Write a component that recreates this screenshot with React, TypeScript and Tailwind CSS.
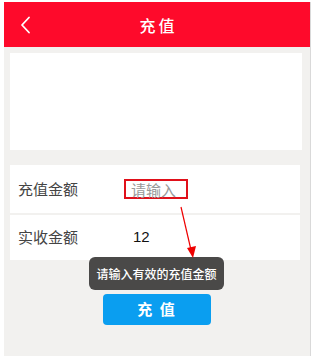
import React from 'react';

const cjk = { fontFamily: '"Noto Sans CJK SC", "Noto Sans", sans-serif' };

export default function App() {
  return (
    <div className="w-[317px] h-[356px] bg-white overflow-hidden pl-[4px] pt-[2px]" style={cjk}>
      <div className="relative w-[307px] h-[354px] bg-[#f2f1ef] border-r border-[#d9d9d9] flex flex-col">
        {/* header */}
        <div className="relative h-[45px] bg-[#fe0a2b] flex items-center justify-center">
          <svg className="absolute left-[15px] top-[14px]" width="16" height="18" viewBox="0 0 16 18">
            <path d="M10 1.5 L3 9 L10 16.5" fill="none" stroke="white" strokeWidth="1.8" strokeLinecap="round" strokeLinejoin="round" />
          </svg>
          <span className="text-white text-[16px] font-medium tracking-[3px] pl-[3px]">充值</span>
        </div>

        <div className="mt-[6px] ml-[6px] mr-[8px] h-[97px] bg-white" />

        {/* form */}
        <div className="mt-[15px] ml-[6px] mr-[10px] h-[48px] bg-white flex items-center">
          <span className="ml-[8px] w-[106px] text-[15px] text-[#444]">充值金额</span>
          <div className="h-[20px] w-[64px] border-2 border-[#e0101a] flex items-center">
            <span className="ml-[5px] text-[15px] text-[#999] leading-none">请输入</span>
          </div>
        </div>
        <div className="mt-[2px] ml-[6px] mr-[10px] h-[45px] bg-white flex items-center">
          <span className="ml-[8px] w-[115px] text-[15px] text-[#444]">实收金额</span>
          <span className="text-[15px] text-[#111]" style={{ fontFamily: '"Liberation Sans", Arial, sans-serif' }}>12</span>
        </div>

        <div className="mt-[34px] flex justify-center">
          <button className="w-[108px] h-[31px] rounded-[4px] bg-[#0a9ef0] text-white text-[15px] font-bold tracking-[2px]">
            充 值
          </button>
        </div>

        {/* tooltip */}
        <div className="absolute left-[85px] top-[255px] w-[135px] h-[33px] rounded-[6px] bg-[#4a4948] flex items-center justify-center">
          <span className="text-white text-[12px] font-medium">请输入有效的充值金额</span>
        </div>

        {/* annotation arrow */}
        <svg className="absolute left-0 top-0 pointer-events-none" width="307" height="354" viewBox="0 0 307 354">
          <line x1="177" y1="205" x2="187" y2="248" stroke="#e00" strokeWidth="1.2" />
          <polygon points="183,246 192,244 189,256" fill="#e00" />
        </svg>
      </div>
    </div>
  );
}
